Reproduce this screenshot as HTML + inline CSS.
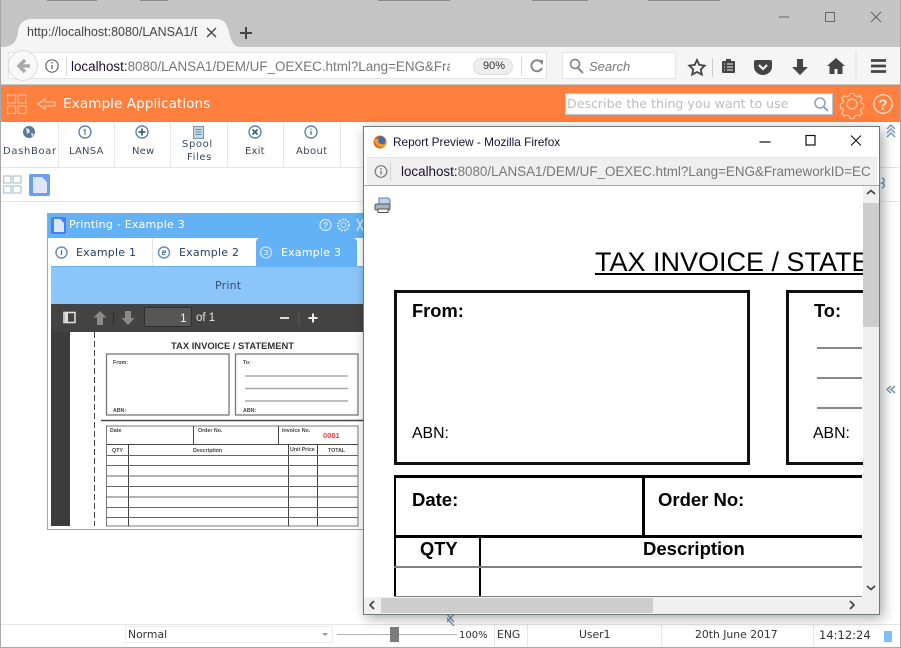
<!DOCTYPE html>
<html><head><meta charset="utf-8"><style>
html,body{margin:0;padding:0;background:#fff}
#p{position:relative;width:901px;height:648px;overflow:hidden;background:#fff;font-family:"Liberation Sans",sans-serif}
#p div,#p span.t{position:absolute;white-space:nowrap;box-sizing:border-box}
.t{line-height:1}
.d{font-family:"DejaVu Sans",sans-serif;color:#3a4a5a;font-size:10px;letter-spacing:.2px}
.s{font-family:"DejaVu Sans",sans-serif;font-size:10.8px;color:#333}
svg{position:absolute;left:0;top:0}
</style></head><body><div id="p">
<!-- window chrome -->
<div style="left:0;top:0;width:901px;height:47px;background:#c4c4c4"></div>
<div style="left:0;top:0;width:1px;height:648px;background:#a8a8a8"></div>
<div style="left:900px;top:0;width:1px;height:648px;background:#a8a8a8"></div>
<div style="left:0;top:647px;width:901px;height:1px;background:#a8a8a8"></div>
<div style="left:1px;top:47px;width:899px;height:38px;background:#f5f5f5"></div>
<div style="left:1px;top:84px;width:899px;height:1px;background:#c8c8c8"></div>
<div style="left:8px;top:52px;width:539px;height:27px;background:#fff;border:1px solid #e4e4e4"></div>
<div style="left:562px;top:52px;width:114px;height:27px;background:#fff;border:1px solid #e4e4e4"></div>
<div style="left:8px;top:50px;width:30px;height:31px;border-radius:50%;background:#f8f8f8;border:1px solid #dcdcdc"></div>
<div style="left:66px;top:57px;width:1px;height:19px;background:#d8d8d8"></div>
<div style="left:521px;top:57px;width:1px;height:19px;background:#d8d8d8"></div>
<div style="left:473px;top:58px;width:40px;height:17px;border-radius:9px;background:#eee;border:1px solid #ddd"></div>
<div style="left:71px;top:58px;font-size:13.4px;line-height:18px;color:#777;width:379px;overflow:hidden"><span style="color:#1a1030">localhost:</span>8080/LANSA1/DEM/UF_OEXEC.html?Lang=ENG&amp;Fra</div>
<div class="t" style="left:483px;top:61px;font-size:11px;color:#333">90%</div>
<div class="t" style="left:589px;top:60px;font-size:13px;color:#777;font-style:italic">Search</div>
<!-- orange bar -->
<div style="left:1px;top:85px;width:899px;height:37px;background:#ff7f3f"></div>
<div class="t" style="left:63px;top:98px;font-family:'DejaVu Sans',sans-serif;font-size:13.7px;color:#fff">Example Applications</div>
<div style="left:565px;top:93px;width:268px;height:22px;background:#fff;border:1px solid #b9c4d0"></div>
<div class="t" style="left:567px;top:98px;font-family:'DejaVu Sans',sans-serif;font-size:12.6px;color:#bdbdbd">Describe the thing you want to use</div>
<!-- toolbar -->
<div style="left:1px;top:167px;width:899px;height:1px;background:#e6e6e6"></div>
<div style="left:1px;top:201px;width:899px;height:1px;background:#e6e6e6"></div>
<div style="left:58px;top:123px;width:1px;height:44px;background:#e8e8e8"></div>
<div style="left:114px;top:123px;width:1px;height:44px;background:#e8e8e8"></div>
<div style="left:170px;top:123px;width:1px;height:44px;background:#e8e8e8"></div>
<div style="left:227px;top:123px;width:1px;height:44px;background:#e8e8e8"></div>
<div style="left:283px;top:123px;width:1px;height:44px;background:#e8e8e8"></div>
<div style="left:340px;top:123px;width:1px;height:44px;background:#e8e8e8"></div>
<div class="t d" style="left:3px;top:147px;letter-spacing:.65px">DashBoar</div>
<div class="t d" style="left:69px;top:147px">LANSA</div>
<div class="t d" style="left:132px;top:147px">New</div>
<div class="t d" style="left:182px;top:140px;letter-spacing:.6px">Spool</div>
<div class="t d" style="left:187px;top:153px;letter-spacing:.6px">Files</div>
<div class="t d" style="left:245px;top:147px">Exit</div>
<div class="t d" style="left:296px;top:147px;letter-spacing:.4px">About</div>
<!-- small window -->
<div style="left:47px;top:213px;width:320px;height:317px;background:#fff;border:1px solid #62b2f5"></div>
<div style="left:47px;top:213px;width:320px;height:25px;background:#62b2f5"></div>
<div class="t" style="left:69px;top:219px;font-family:'DejaVu Sans',sans-serif;font-size:11px;letter-spacing:.22px;color:#fff">Printing - Example 3</div>
<div style="left:256px;top:238px;width:101px;height:29px;background:#62b2f5;border-radius:4px 4px 0 0"></div>
<div style="left:152px;top:238px;width:1px;height:28px;background:#e6e6e6"></div>
<div style="left:51px;top:266px;width:314px;height:1px;background:#62b2f5"></div>
<div class="t" style="left:76px;top:247px;font-family:'DejaVu Sans',sans-serif;font-size:11px;letter-spacing:.22px;color:#24406a">Example 1</div>
<div class="t" style="left:179px;top:247px;font-family:'DejaVu Sans',sans-serif;font-size:11px;letter-spacing:.22px;color:#24406a">Example 2</div>
<div class="t" style="left:281px;top:247px;font-family:'DejaVu Sans',sans-serif;font-size:11px;letter-spacing:.22px;color:#fff">Example 3</div>
<div style="left:51px;top:267px;width:314px;height:37px;background:#8cc6f8"></div>
<div class="t" style="left:215px;top:280px;font-family:'DejaVu Sans',sans-serif;font-size:11px;letter-spacing:.2px;color:#34507a">Print</div>
<div style="left:51px;top:304px;width:314px;height:28px;background:#434343"></div>
<div style="left:144px;top:307px;width:48px;height:20px;background:#565656;border:1px solid #2e2e2e;border-radius:2px"></div>
<div class="t" style="left:180px;top:312px;font-size:12px;color:#eee">1</div>
<div class="t" style="left:196px;top:313px;font-size:11.5px;color:#e4e4e4">of 1</div>
<div style="left:51px;top:332px;width:19px;height:194px;background:#3c3c3c"></div>
<!-- status -->
<div style="left:1px;top:624px;width:899px;height:1px;background:#e6e6e6"></div>
<div style="left:125px;top:626px;width:208px;height:17px;background:#fff;border:1px solid #ececec"></div>
<div class="t s" style="left:128px;top:630px">Normal</div>
<div style="left:337px;top:634px;width:120px;height:1px;background:#b0b0b0"></div>
<div style="left:390px;top:627px;width:9px;height:15px;background:#7c7c7c"></div>
<div class="t" style="left:459px;top:631px;font-family:'DejaVu Sans',sans-serif;font-size:10px;color:#333">100%</div>
<div class="t s" style="left:497px;top:630px">ENG</div>
<div class="t s" style="left:579px;top:630px">User1</div>
<div class="t s" style="left:695px;top:630px">20th June 2017</div>
<div class="t s" style="left:819px;top:630px;font-size:11.5px">14:12:24</div>
<div style="left:494px;top:625px;width:1px;height:21px;background:#e6e6e6"></div>
<div style="left:527px;top:625px;width:1px;height:21px;background:#e6e6e6"></div>
<div style="left:661px;top:625px;width:1px;height:21px;background:#e6e6e6"></div>
<div style="left:813px;top:625px;width:1px;height:21px;background:#e6e6e6"></div>
<div style="left:884px;top:631px;width:8px;height:11px;background:#7fbdf7"></div>

<svg width="901" height="648" viewBox="0 0 901 648" fill="none">
<!-- top fragments -->
<g fill="#8a8a8a"><rect x="47" y="0" width="50" height="1"/><rect x="140" y="0" width="28" height="1"/><rect x="378" y="0" width="72" height="1"/><rect x="532" y="0" width="56" height="1"/><rect x="648" y="0" width="72" height="1"/></g>
<!-- tab -->
<path d="M2 47C14 47 17 40 18 32C19 24 23 19 32 19H216C224 19 227 24 229 32C231 41 234 47 240 47Z" fill="#f5f5f5"/>
<path d="M207 28l9 9M216 28l-9 9" stroke="#444" stroke-width="1.3"/>
<path d="M240 33h12M246 27v12" stroke="#444" stroke-width="2"/>
<!-- window buttons -->
<path d="M779 17h10" stroke="#666"/><rect x="825.500" y="12.500" width="9" height="9" stroke="#666"/><path d="M871 12l10 10M881 12l-10 10" stroke="#666"/>
<!-- nav -->
<path d="M30 66H21M25 60l-6 6 6 6" stroke="#aaa" stroke-width="3.600"/>
<circle cx="52" cy="66" r="6.200" stroke="#666" stroke-width="1.200"/><path d="M52 65v4M52 62v1.500" stroke="#666" stroke-width="1.400"/>
<path d="M541 62a5.500 5.500 0 1 0 1 6" stroke="#888" stroke-width="2"/><path d="M537 60h6v5z" fill="#888"/>
<circle cx="575" cy="64" r="4.500" stroke="#888" stroke-width="1.700"/><path d="M578 68l5 5" stroke="#888" stroke-width="2"/>
<path d="M697 60l2.300 4.900 5.400.7-3.900 3.700 1 5.300-4.800-2.600-4.800 2.600 1-5.300-3.900-3.700 5.400-.7z" stroke="#444" stroke-width="1.800"/>
<path d="M712.500 58v19" stroke="#ccc"/>
<rect x="722" y="61" width="13" height="12" rx="1" fill="#444"/><rect x="726" y="59" width="5" height="3" fill="#444"/><path d="M724 64h1M724 67h1M724 70h1M727 64h6M727 67h6M727 70h6" stroke="#f5f5f5"/>
<path d="M756 60h14a2 2 0 0 1 2 2v5c0 4-4 8-9 8s-9-4-9-8v-5a2 2 0 0 1 2-2z" fill="#444"/><path d="M759 65l4 4 4-4" stroke="#f5f5f5" stroke-width="2.200"/>
<path d="M797 59h6v8h5l-8 8-8-8h5z" fill="#444"/>
<path d="M836 58l-9 8h2.500v8h5v-5h3v5h5v-8h2.500z" fill="#444"/>
<path d="M856 50v29" stroke="#ddd"/>
<path d="M871 60.500h15M871 66h15M871 71.500h15" stroke="#444" stroke-width="2.800"/>
<!-- orange icons -->
<g stroke="#ffb48c" stroke-width="1.200"><rect x="7.500" y="95" width="8" height="8"/><rect x="18" y="95" width="8" height="8"/><rect x="7.500" y="106" width="8" height="7.500"/><rect x="18" y="106" width="8" height="7.500"/></g>
<path d="M38 104l7-5v3h10v4H45v3z" stroke="#ffcdb2" stroke-width="1.100"/>
<circle cx="820" cy="103" r="5" stroke="#8aa8c6" stroke-width="1.600"/><path d="M824 107l4 4" stroke="#8aa8c6" stroke-width="2"/>
<circle cx="852" cy="104" r="5" stroke="#ffc9a8" stroke-width="1.200"/>
<path d="M850 94h4l1 2.500 2.500 1 2.500-1 2.500 3-1.500 2 .5 2.500 2.500 1v4l-2.500 1-.5 2.500 1.500 2-2.500 3-2.500-1-2.500 1-1 2.500h-4l-1-2.500-2.500-1-2.500 1-2.500-3 1.500-2-.5-2.500-2.500-1v-4l2.500-1 .5-2.500-1.500-2 2.500-3 2.500 1 2.500-1z" transform="translate(0 -1) translate(852 104) scale(.97) translate(-852 -104)" stroke="#ffc9a8" stroke-width="1.200"/>
<circle cx="883" cy="104" r="9.200" stroke="#ffd4ba" stroke-width="1.500"/>
<text x="883" y="109.500" text-anchor="middle" font-family="Liberation Sans" font-weight="bold" font-size="15" fill="#ffe6d6">?</text>
<!-- toolbar icons -->
<circle cx="29" cy="132" r="6" fill="#557a9e"/><path d="M26 128l3 1 1 3-3 2zM31 133l3 1-2 3z" fill="#dce6ef"/>
<g stroke="#5f86ab" stroke-width="1.400"><circle cx="85" cy="132" r="6"/><circle cx="142" cy="132" r="6"/><circle cx="255" cy="132" r="6"/><circle cx="311" cy="132" r="6"/></g>
<path d="M85 129.500l-1.500 1M85 129v6" stroke="#5f86ab" stroke-width="1.300"/>
<path d="M142 128.500v7M138.500 132h7" stroke="#3d6085" stroke-width="1.800"/>
<path d="M252.500 129.500l5 5M257.500 129.500l-5 5" stroke="#3d6085" stroke-width="1.800"/>
<path d="M311 131v4M311 128.500v1.300" stroke="#5f86ab" stroke-width="1.500"/>
<rect x="193.500" y="126.500" width="10" height="12" fill="#c6d6e4" stroke="#7b97b3"/><path d="M195.500 129.500h6M195.500 132h6M195.500 134.500h6" stroke="#6c8aa8"/>
<!-- row icons -->
<g stroke="#b7c6d6" stroke-width="1.300"><rect x="3.500" y="176" width="7.500" height="7"/><rect x="13" y="176" width="8" height="7"/><rect x="3.500" y="186" width="7.500" height="7"/><rect x="13" y="186" width="8" height="7"/></g>
<rect x="29" y="174" width="21" height="22" rx="2" fill="#6c9bf9"/><path d="M33 177h9l5 5v11H33z" fill="#dde6fe"/>
<!-- small window icons -->
<rect x="51" y="217" width="15" height="17" rx="2" fill="#4c7fee"/><path d="M54 219h6l4 4v9H54z" fill="#d9e5fd"/>
<circle cx="325.500" cy="225" r="5.500" stroke="#cfe6fb" stroke-width="1.200"/><text x="325.500" y="228.500" text-anchor="middle" font-family="Liberation Sans" font-weight="bold" font-size="9" fill="#cfe6fb">?</text>
<circle cx="343.500" cy="225" r="5.500" stroke="#cfe6fb" stroke-width="1.800" stroke-dasharray="2 1"/><circle cx="343.500" cy="225" r="2.500" stroke="#cfe6fb"/>
<path d="M357 219l6 12M363 219l-6 12" stroke="#cfe6fb" stroke-width="1.500"/>
<circle cx="61.500" cy="252.500" r="5.500" stroke="#6a8eb0" stroke-width="1.500"/><path d="M61.500 250v5" stroke="#4f7497" stroke-width="1.300"/>
<circle cx="164" cy="252.500" r="5.500" stroke="#6a8eb0" stroke-width="1.500"/><path d="M162 251h3.500v1.500H162.500v2h3" stroke="#4f7497" stroke-width="1"/>
<circle cx="266" cy="252.500" r="5.500" stroke="#bcdcf8" stroke-width="1.500"/><path d="M264 250.500h3.500l-1.500 2h1.500v2H264" stroke="#bcdcf8" stroke-width=".9"/>
<!-- pdf toolbar -->
<rect x="64" y="312.500" width="11" height="10" stroke="#ddd" stroke-width="1.600"/><rect x="65" y="313" width="3" height="9" fill="#ddd"/>
<path d="M100 311l-6.500 6.500H97V325h6v-7.500h3.500z" fill="#8a8a8a"/><path d="M113.500 312v13" stroke="#2e2e2e"/>
<path d="M125 311h6v7h3.500L128 325l-6.500-7h3.500z" fill="#8a8a8a"/>
<path d="M280 318h9" stroke="#ddd" stroke-width="2"/><path d="M299 312v14" stroke="#5a5a5a"/><path d="M308.500 318h9M313 313.500v9" stroke="#eee" stroke-width="2"/>
<!-- small invoice -->
<path d="M94.500 332v194" stroke="#444" stroke-dasharray="6 3"/>
<text x="232.500" y="349" text-anchor="middle" font-family="Liberation Sans" font-weight="bold" font-size="9.400" fill="#333">TAX INVOICE / STATEMENT</text>
<g stroke="#777" stroke-width="1.300"><rect x="106.500" y="354" width="122.500" height="61"/><rect x="235.500" y="354" width="122.500" height="61"/></g>
<path d="M245 376h103M245 388.500h103M245 401h103" stroke="#aaa" stroke-width="1.500"/>
<path d="M101 420.500h262" stroke="#444" stroke-width="1.400"/>
<g font-family="Liberation Sans" font-weight="bold" font-size="5.300" fill="#444">
<text x="113" y="364">From:</text><text x="243" y="364">To:</text><text x="113" y="412">ABN:</text><text x="243" y="412">ABN:</text>
<text x="110" y="432">Date</text><text x="198" y="432">Order No.</text><text x="282" y="432">Invoice No.</text>
<text x="112" y="452">QTY</text><text x="193" y="452">Description</text><text x="290" y="451">Unit Price</text><text x="328" y="452">TOTAL</text></g>
<text x="323" y="438" font-family="Liberation Sans" font-weight="bold" font-size="7.500" fill="#e84040">0001</text>
<g stroke="#555"><rect x="106.500" y="426" width="251.500" height="100" stroke="#777"/><path d="M107 444.500h251M193.500 426v18M278.500 426v18M128.500 444v82M288.500 444v82M317.500 444v82" stroke="#444"/><path d="M107 455.500h251M107 465.500h251M107 476h251M107 486.500h251M107 497h251M107 507.500h251M107 517.500h251" stroke="#666"/></g>
<!-- right arrows -->
<g stroke="#7b9bb8" stroke-width="1.500"><path d="M887 133l4-4 4 4M887 137l4-4 4 4M887 129l4-4 4 4"/><path d="M891 386l-4 3.500 4 3.500M895 386l-4 3.500 4 3.500"/><path d="M447 614l7 8M454 614l-7 8M447 618l7 8" /></g>
<path d="M882 178c3 1 3 4 0 5 3 1 3 4 0 5" stroke="#7b9bb8" stroke-width="1.500"/>
<path d="M322 633l3 3 3-3z" fill="#999"/>
</svg>
<div class="t" style="left:27px;top:26px;font-size:12.5px;color:#444;width:170px;overflow:hidden">http://localhost:8080/LANSA1/D</div>

<!-- popup -->
<div style="left:363px;top:126px;width:517px;height:489px;background:#fff;border:1px solid #6e7a76;box-shadow:3px 3px 12px rgba(0,0,0,.35);overflow:hidden">
 <div class="t" style="left:29px;top:10px;font-size:11.8px;color:#1a1030">Report Preview - Mozilla Firefox</div>
 <div style="left:3px;top:30px;width:510px;height:28px;background:#efefef;border-top:1px solid #e6e6e6;"></div>
 <div style="left:0;top:58px;width:515px;height:1px;background:#a6a6a6"></div>
 <div style="left:37px;top:36px;font-size:13.4px;line-height:18px;color:#777;width:470px;overflow:hidden"><span style="color:#1a1030">localhost:</span>8080/LANSA1/DEM/UF_OEXEC.html?Lang=ENG&amp;FrameworkID=EC</div>
 <!-- doc -->
 <div class="t" style="left:231px;top:122px;font-size:27px;color:#000;text-decoration:underline;width:268px;overflow:hidden;height:34px">TAX INVOICE / STATEMENT</div>
 <div style="left:30px;top:163px;width:356px;height:175px;border:3px solid #111"></div>
 <div style="left:422px;top:163px;width:90px;height:175px;border:3px solid #111;border-right:0"></div>
 <div class="t" style="left:48px;top:175px;font-size:18.3px;font-weight:bold;color:#000">From:</div>
 <div class="t" style="left:450px;top:175px;font-size:18.3px;font-weight:bold;color:#000">To:</div>
 <div class="t" style="left:48px;top:299px;font-size:15.8px;color:#000">ABN:</div>
 <div class="t" style="left:449px;top:299px;font-size:15.8px;color:#000">ABN:</div>
 <div style="left:453px;top:220px;width:45px;height:2px;background:#888"></div>
 <div style="left:453px;top:250px;width:45px;height:2px;background:#888"></div>
 <div style="left:453px;top:280px;width:45px;height:2px;background:#888"></div>
 <div style="left:30px;top:348px;width:468px;height:2.500px;background:#000"></div>
 <div style="left:30px;top:408px;width:468px;height:2.500px;background:#000"></div>
 <div style="left:30px;top:348px;width:2px;height:124px;background:#000"></div>
 <div style="left:278px;top:348px;width:3px;height:62px;background:#000"></div>
 <div style="left:115px;top:409px;width:2px;height:62px;background:#000"></div>
 <div style="left:30px;top:439px;width:468px;height:2px;background:#808080"></div>
 <div style="left:30px;top:469px;width:468px;height:1px;background:#808080"></div>
 <div class="t" style="left:48px;top:364px;font-size:18.5px;font-weight:bold;color:#000">Date:</div>
 <div class="t" style="left:294px;top:364px;font-size:18.5px;font-weight:bold;color:#000">Order No:</div>
 <div class="t" style="left:56px;top:413px;font-size:18.3px;font-weight:bold;color:#000">QTY</div>
 <div class="t" style="left:279px;top:413px;font-size:18.5px;font-weight:bold;color:#000">Description</div>
 <!-- scrollbars -->
 <div style="left:499px;top:59px;width:16px;height:411px;background:#f0f0f0"></div>
 <div style="left:499px;top:76px;width:16px;height:124px;background:#cdcdcd"></div>
 <div style="left:0;top:470px;width:515px;height:17px;background:#f0f0f0"></div>
 <div style="left:17px;top:471px;width:272px;height:15px;background:#cdcdcd"></div>
 <svg width="515" height="487" viewBox="0 0 515 487" fill="none">
  <circle cx="16" cy="15" r="6.500" fill="#e66a1f"/><circle cx="17" cy="13.500" r="4.200" fill="#3d6db5"/><path d="M10 12c1 5 4 8 8 8s4-3 5-5c-2 3-6 3-8 1-1-1-1-3 0-4z" fill="#f0a028"/>
  <path d="M395.500 15h11" stroke="#111" stroke-width="1.200"/>
  <rect x="442" y="8.500" width="9" height="9.500" stroke="#111" stroke-width="1.200"/>
  <path d="M487 8.500l10 10M497 8.500l-10 10" stroke="#111" stroke-width="1.100"/>
  <circle cx="17" cy="44.500" r="5.800" stroke="#777" stroke-width="1.200"/><path d="M17 43.500v4M17 41v1.500" stroke="#777" stroke-width="1.300"/>
  <path d="M26.500 35v19" stroke="#d4d4d4"/>
  <path d="M15 71h9l2 2v5H15z" fill="#bcd3ee" stroke="#5d7fa5"/><rect x="11" y="77" width="15" height="6" rx="1.500" fill="#aab2bb" stroke="#4a5460"/><rect x="14" y="82" width="10" height="3.500" fill="#fff" stroke="#555"/>
  <path d="M503 67l4-3.500 4 3.500" stroke="#444" stroke-width="1.700"/>
  <path d="M503 459l4 3.500 4-3.500" stroke="#444" stroke-width="1.700"/>
  <path d="M10 474l-4 4 4 4" stroke="#444" stroke-width="1.700"/>
  <path d="M486 474l4 4-4 4" stroke="#444" stroke-width="1.700"/>
 </svg>
</div>
</div></body></html>
